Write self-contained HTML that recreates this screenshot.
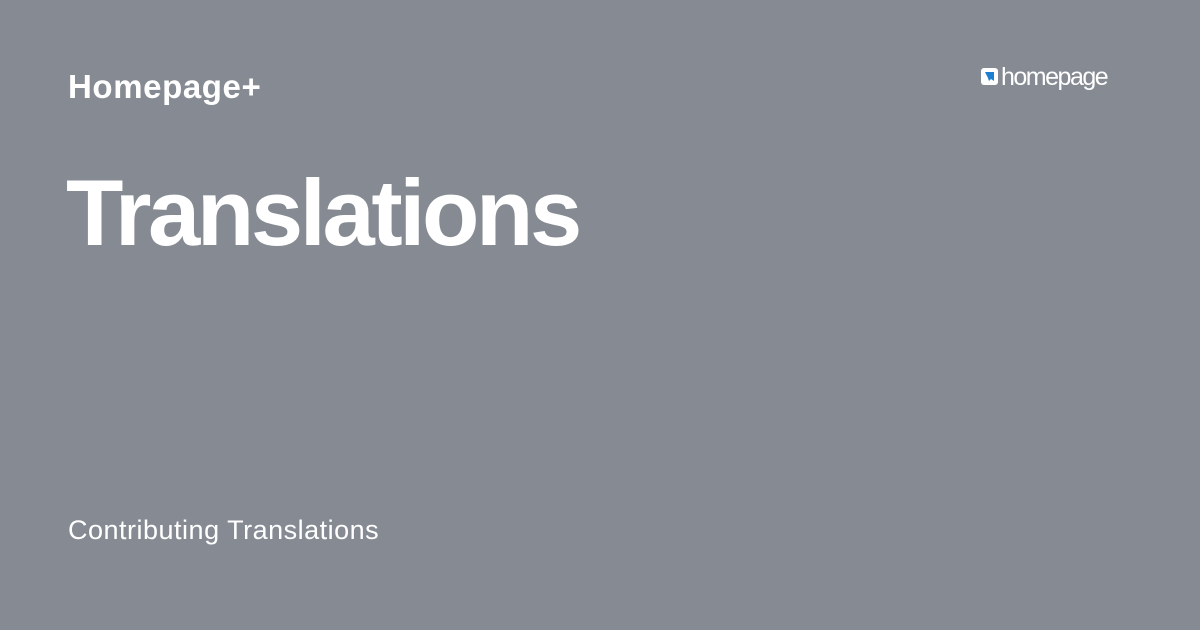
<!DOCTYPE html>
<html><head><style>
body{margin:0;width:1200px;height:630px;background:#868b93;font-family:"Liberation Sans",sans-serif;color:#fff;position:relative;overflow:hidden}
div{position:absolute;white-space:nowrap}
.a{left:68px;top:69px;font-size:33px;font-weight:bold;line-height:36px;letter-spacing:0.6px}
.b{left:66px;top:163px;font-size:94px;font-weight:bold;line-height:100px;letter-spacing:-3.4px}
.c{left:68px;top:514px;font-size:27px;line-height:32px;letter-spacing:0.5px}
.l{left:1001px;top:62px;font-size:25px;line-height:30px;letter-spacing:-1.5px;font-weight:300}
.i{left:981px;top:68px;width:17px;height:17px;background:#fff;border-radius:3px}
</style></head><body>
<div class="a">Homepage+</div>
<div class="b">Translations</div>
<div class="c">Contributing Translations</div>
<div class="i"><svg width="17" height="17"><path d="M4 4h9v9l-3-2-2 2-1-3z" fill="#1e7fd0"/></svg></div>
<div class="l">homepage</div>
</body></html>
